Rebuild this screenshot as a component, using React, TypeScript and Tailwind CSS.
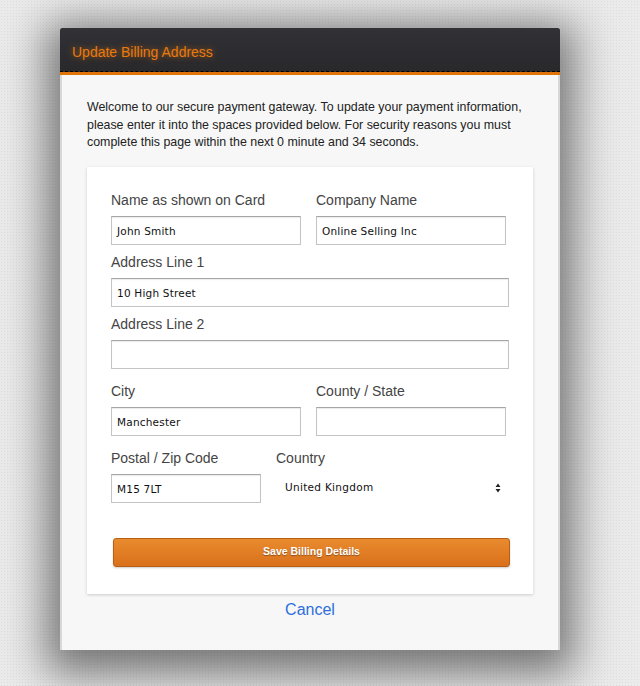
const sans = { fontFamily: '"Liberation Sans", Arial, sans-serif' }
const mono = { fontFamily: '"DejaVu Sans", Verdana, sans-serif' }

function Field({ label, value, className = '' }: { label: string; value?: string; className?: string }) {
  return (
    <div className={className}>
      <label className="block text-[14px] leading-[18px] text-[#444]">{label}</label>
      <div className="mt-[7px] h-[29px] border border-[#c4c4c4] border-t-[#a6a6a6] bg-white pl-[5px] pt-[3px] flex items-center shadow-[inset_0_1px_1px_rgba(0,0,0,0.08)]">
        <span className="text-[10.5px] text-[#111] tracking-[0.2px]" style={mono}>
          {value}
        </span>
      </div>
    </div>
  )
}

export default function App() {
  return (
    <div
      className="h-[686px] w-[640px] overflow-hidden bg-[#ebebeb] bg-[radial-gradient(#dedede_1px,transparent_1px)] bg-[size:3px_3px] pt-[28px]"
      style={sans}
    >
      <div className="ml-[60px] w-[500px] shadow-[0_10px_40px_14px_rgba(0,0,0,0.5)]">
        {/* header */}
        <div className="h-[44px] bg-gradient-to-b from-[#313136] to-[#29292c] border-b border-dashed border-black rounded-t-[2px] flex items-center pl-[12px] pt-[5px]">
          <h1 className="text-[14px] text-[#e87a10] [text-shadow:0_0_6px_rgba(232,122,16,0.7)]">Update Billing Address</h1>
        </div>
        <div className="h-[3px] bg-[#df7409]" />

        {/* body */}
        <div className="bg-[#f7f7f7] border-x-2 border-[#d8d8d8] px-[25px] pt-[24px] pb-[28px]">
          <p className="text-[12.4px] leading-[17.5px] text-[#222]">
            Welcome to our secure payment gateway. To update your payment information, please enter it into the spaces
            provided below. For security reasons you must complete this page within the next 0 minute and 34 seconds.
          </p>

          <div className="mt-[15px] bg-white shadow-[0_1px_3px_rgba(0,0,0,0.18)] pl-[24px] pr-[24px] pt-[24px] pb-[27px]">
            <div className="grid grid-cols-[190px_190px] gap-x-[15px]">
              <Field label="Name as shown on Card" value="John Smith" />
              <Field label="Company Name" value="Online Selling Inc" />
            </div>
            <Field className="mt-[8px]" label="Address Line 1" value="10 High Street" />
            <Field className="mt-[8px]" label="Address Line 2" />
            <div className="mt-[13px] grid grid-cols-[190px_190px] gap-x-[15px]">
              <Field label="City" value="Manchester" />
              <Field label="County / State" />
            </div>
            <div className="mt-[13px] flex gap-[15px]">
              <Field className="w-[150px]" label="Postal / Zip Code" value="M15 7LT" />
              <div className="flex-1">
                <label className="block text-[14px] leading-[18px] text-[#444]">Country</label>
                <div className="mt-[7px] h-[29px] flex items-center justify-between pl-[9px] pr-[8px]">
                  <span className="text-[10.5px] text-[#111] tracking-[0.3px]" style={mono}>
                    United Kingdom
                  </span>
                  <svg width="6" height="10" viewBox="0 0 6 10">
                    <path d="M3 0.5 L5.5 4 H0.5 Z M3 9.5 L5.5 6 H0.5 Z" fill="#222" />
                  </svg>
                </div>
              </div>
            </div>

            <button className="mt-[35px] ml-[2px] h-[29px] w-[397px] rounded-[3px] border border-[#b95e12] bg-gradient-to-b from-[#e98b2e] to-[#d9701b] text-[10.5px] font-bold text-white [text-shadow:0_1px_1px_rgba(0,0,0,0.35)] shadow-[0_1px_2px_rgba(0,0,0,0.2)]">
              Save Billing Details
            </button>
          </div>

          <div className="mt-[4px] text-center">
            <a className="text-[16px] text-[#2d6fdc]">Cancel</a>
          </div>
        </div>
      </div>
    </div>
  )
}
